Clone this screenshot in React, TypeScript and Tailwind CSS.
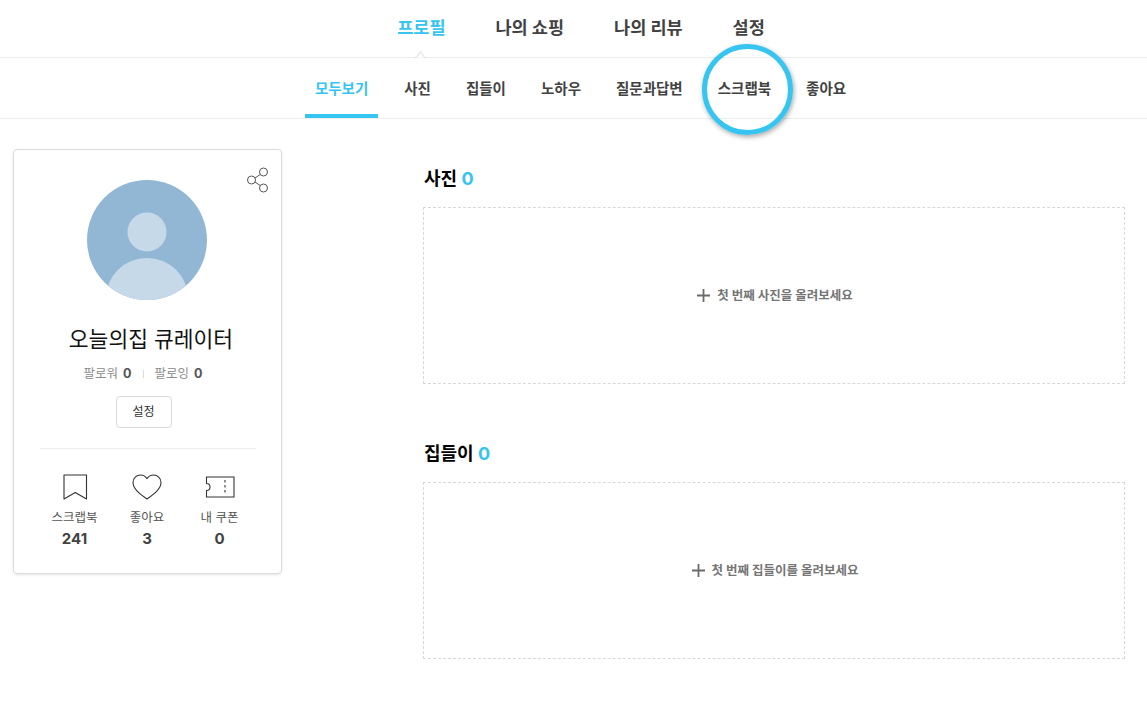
const tabs = ["프로필", "나의 쇼핑", "나의 리뷰", "설정"];
const subTabs = ["모두보기", "사진", "집들이", "노하우", "질문과답변", "스크랩북", "좋아요"];

function ShareIcon() {
  return (
    <svg width="24" height="27" viewBox="0 0 24 27" fill="none" stroke="#555" strokeWidth="1">
      <circle cx="17.5" cy="6" r="4" />
      <circle cx="5.5" cy="14" r="4" />
      <circle cx="17.5" cy="22" r="4" />
      <path d="M9 12l5.200-3.500M9 16l5.200 3.500" />
    </svg>
  );
}

function Avatar() {
  return (
    <svg width="120" height="120" viewBox="0 0 120 120">
      <defs>
        <clipPath id="avatar-clip">
          <circle cx="60" cy="60" r="60" />
        </clipPath>
      </defs>
      <circle cx="60" cy="60" r="60" fill="#92b7d5" />
      <g clipPath="url(#avatar-clip)" fill="#c6d9e9">
        <circle cx="60" cy="52" r="19.500" />
        <ellipse cx="60" cy="118" rx="41" ry="40" />
      </g>
    </svg>
  );
}

function BookmarkIcon() {
  return (
    <svg width="26" height="26" viewBox="0 0 26 26" fill="none" stroke="#333" strokeWidth="1.100" strokeLinejoin="round">
      <path d="M2 1h22.500v24l-11.250-6.500L2 25z" />
    </svg>
  );
}

function HeartIcon() {
  return (
    <svg width="30" height="26" viewBox="0 0 30 26" fill="none" stroke="#333" strokeWidth="1.100" strokeLinejoin="round">
      <path d="M15 25C8 20 1 15 1 8.500 1 4 4.500 1 8.500 1c2.700 0 5 1.300 6.500 3.600C16.500 2.300 18.800 1 21.500 1 25.500 1 29 4 29 8.500 29 15 22 20 15 25z" />
    </svg>
  );
}

function TicketIcon() {
  return (
    <svg width="30" height="24" viewBox="0 0 30 24" fill="none" stroke="#333" strokeWidth="1.100">
      <path d="M1.500 2h27.500v20H1.500v-6.500c2 0 3.500-1.500 3.500-3.500S3.500 8.500 1.500 8.500z" />
      <path d="M20 5v14" strokeDasharray="2.500 2.500" />
    </svg>
  );
}

function EmptySection({ title, message, last }: { title: string; message: string; last?: boolean }) {
  return (
    <section className={last ? "" : "mb-[55px]"}>
      <h2 className="h-[28px] mb-[15px] pt-[1px] pl-px text-[18px] leading-[28px] font-bold text-black">
        {title} <span className="text-[#35c5f0]">0</span>
      </h2>
      <div className="h-[177px] flex items-center justify-center gap-[7px] pl-[2px] border border-dashed border-[#d8d8d8]">
        <svg width="13" height="13" viewBox="0 0 13 13" stroke="#6b6b6b" strokeWidth="1.800">
          <path d="M6.500 0v13M0 6.500h13" />
        </svg>
        <span className="text-[12.5px] font-bold text-[#757575] pt-px">{message}</span>
      </div>
    </section>
  );
}

export default function App() {
  return (
    <div className="min-h-screen bg-white text-[#424242] font-['Inter','Noto_Sans_CJK_KR',sans-serif]">
      <nav className="h-[58px] border-b border-[#ededed] flex justify-center gap-[50px] pl-[15px]">
        {tabs.map((tab, i) => (
          <a
            key={tab}
            className={`relative h-full flex items-center text-[17.5px] font-bold ${i === 0 ? "text-[#35c5f0]" : "text-[#424242]"}`}
          >
            {tab}
            {i === 0 && (
              <svg className="absolute bottom-[-1px] left-[17px]" width="13" height="7" viewBox="0 0 13 7" fill="#fff" stroke="#dedede">
                <path d="M0 6.500h2.500l4-6 4 6H13" />
              </svg>
            )}
          </a>
        ))}
      </nav>

      <nav className="h-[61px] border-b border-[#ededed] flex justify-center gap-[15px] pl-[14px]">
        {subTabs.map((tab, i) => (
          <a
            key={tab}
            className={`relative h-[60px] flex items-center px-[10px] text-[14.5px] font-bold ${i === 0 ? "text-[#35c5f0] border-b-[4px] border-[#35c5f0] pt-[6px] mr-px" : "text-[#424242] pt-[2px]"}`}
          >
            {tab}
            {i === 5 && (
              <span className="absolute left-[-6px] top-[-14px] w-[91px] h-[91px] rounded-full border-[5px] border-[#35c5f0] shadow-[1px_2px_5px_rgba(0,0,0,0.35)]" />
            )}
          </a>
        ))}
      </nav>

      <main className="flex items-start pl-[13px] pr-[22px] pt-[30px]">
        <aside className="relative w-[269px] h-[425px] shrink-0 rounded-[4px] border border-[#dadce0] shadow-[0_1px_3px_rgba(0,0,0,0.1)] flex flex-col items-center pt-[30px] px-[26px]">
          <span className="absolute top-[16px] right-[11px]">
            <ShareIcon />
          </span>
          <div className="mr-[2px] h-[120px]">
            <Avatar />
          </div>
          <div className="mt-[21px] ml-[7px] text-[21.5px] leading-[36px] font-normal text-[#111]">오늘의집 큐레이터</div>
          <div className="mt-[7px] mr-[9px] h-[20px] flex items-center text-[12.5px] text-[#8c8c8c]">
            팔로워 <b className="ml-[5px] text-[#555]">0</b>
            <span className="mx-[11px] h-[8px] w-px bg-[#dadada]" />
            팔로잉 <b className="ml-[5px] text-[#555]">0</b>
          </div>
          <button className="mt-[12px] mr-[8px] w-[56px] h-[32px] rounded-[4px] border border-[#dcdcdc] text-[12px] text-[#333]">설정</button>
          <div className="w-[216px] mt-[20px] border-t border-[#ededed] flex justify-between pt-[25px] pl-[7px] pr-[8px]">
            {[
              { label: "스크랩북", value: "241", icon: <BookmarkIcon /> },
              { label: "좋아요", value: "3", icon: <HeartIcon /> },
              { label: "내 쿠폰", value: "0", icon: <TicketIcon /> },
            ].map((item) => (
              <div key={item.label} className="w-[56px] flex flex-col items-center">
                <div className="h-[26px] flex items-center">{item.icon}</div>
                <div className="mt-[8px] text-[12.5px] leading-[20px] text-[#555] whitespace-nowrap">{item.label}</div>
                <div className="text-[15px] leading-[22px] font-bold text-[#424242]">{item.value}</div>
              </div>
            ))}
          </div>
        </aside>

        <div className="ml-[141px] flex-1 pt-[15px]">
          <EmptySection title="사진" message="첫 번째 사진을 올려보세요" />
          <EmptySection title="집들이" message="첫 번째 집들이를 올려보세요" last />
        </div>
      </main>
    </div>
  );
}
